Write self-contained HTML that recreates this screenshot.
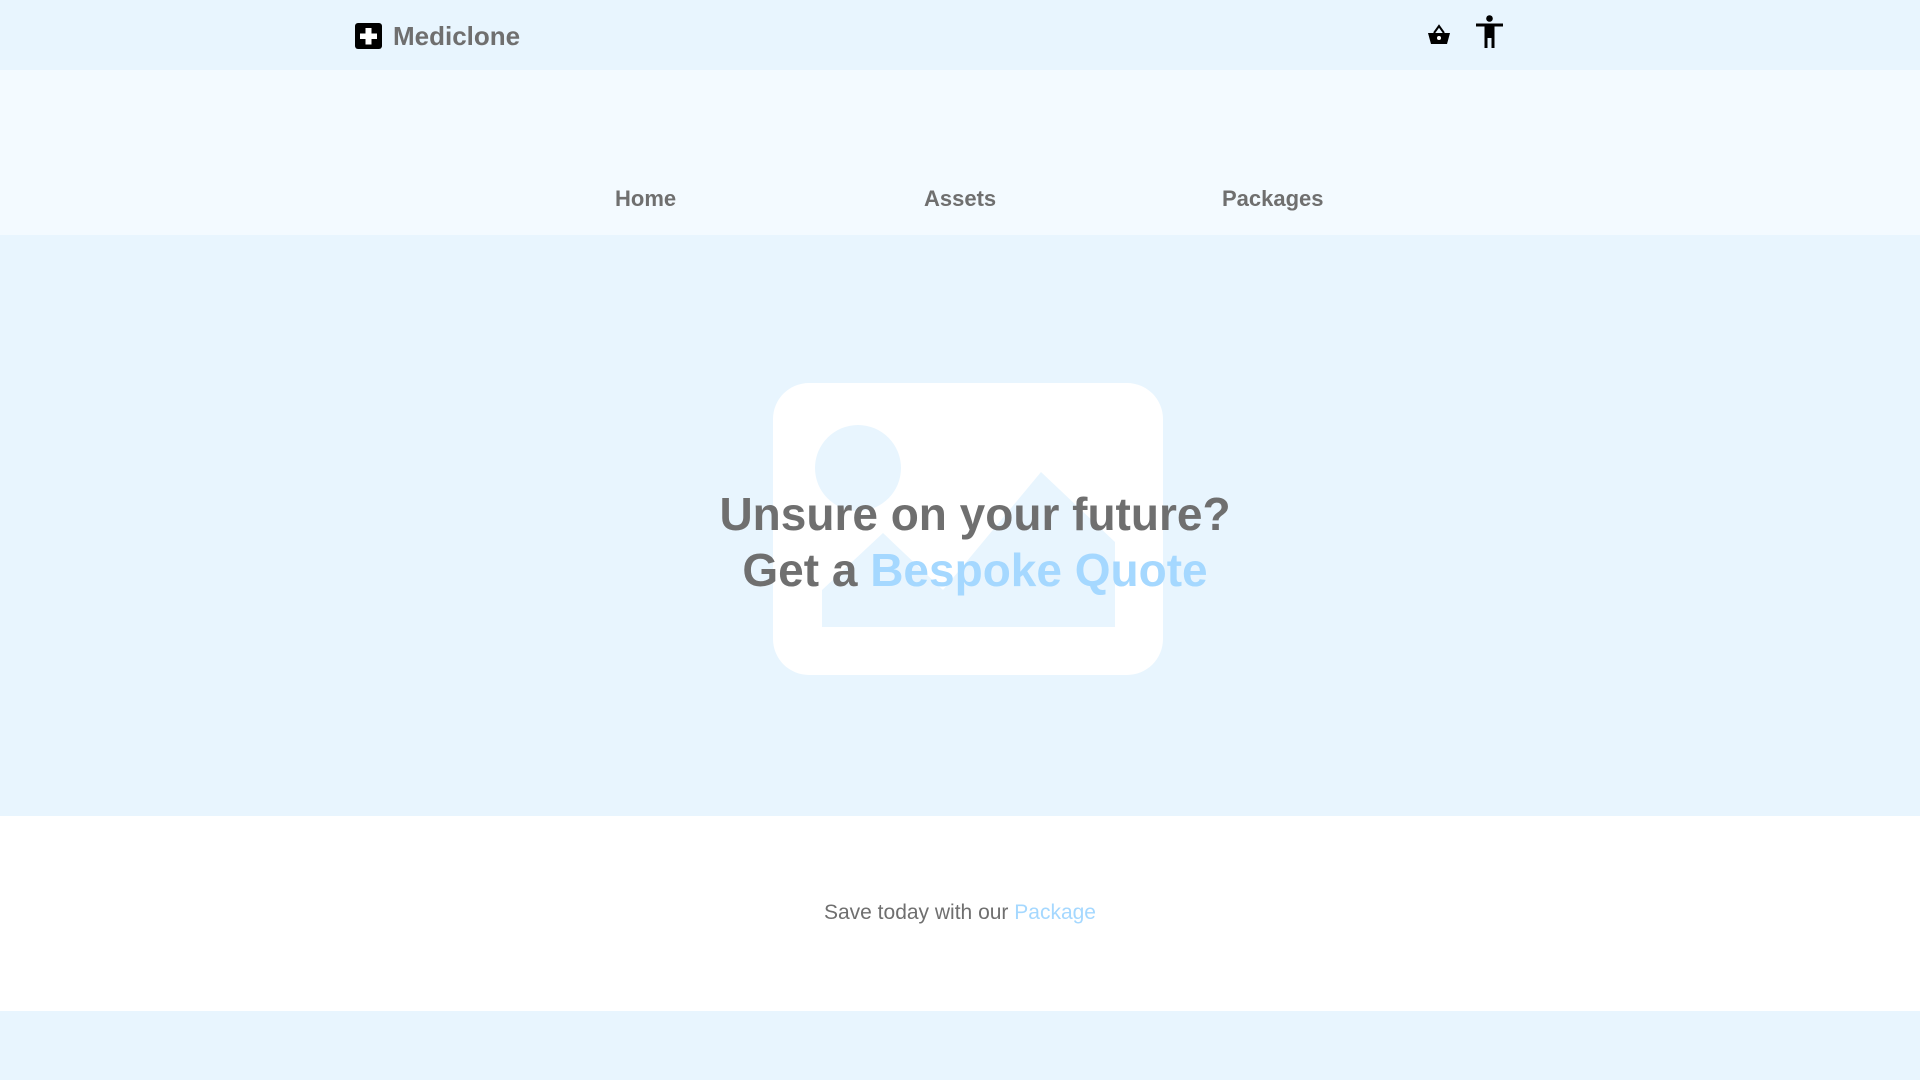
<!DOCTYPE html>
<html><head><meta charset="utf-8"><style>
*{margin:0;padding:0;box-sizing:border-box}
body{width:1920px;height:1080px;overflow:hidden;font-family:"Liberation Sans",Arial,sans-serif;background:#e8f5fe;position:relative}
.hdr{position:absolute;left:0;top:0;width:1920px;height:70px;background:#e8f5fe}
.nav{position:absolute;left:0;top:70px;width:1920px;height:165px;background:#f3faff}
.hero{position:absolute;left:0;top:235px;width:1920px;height:581px;background:#e8f5fe}
.white{position:absolute;left:0;top:816px;width:1920px;height:195px;background:#fff}
.t{position:absolute;font-weight:bold;color:#6f6f6f;white-space:nowrap}
.blue{color:#a5d8ff}
</style></head><body>
<div class="hdr"></div>
<div class="nav"></div>
<div class="hero"></div>
<div class="white"></div>
<svg style="position:absolute;left:355px;top:23px" width="27" height="26" viewBox="0 0 27 26"><rect width="27" height="26" rx="3" fill="#000"/><path d="M10.5 5h6v5.5h5.5v5.5h-5.5v5.5h-6v-5.5h-5.5v-5.5h5.5z" fill="#fff"/></svg>
<div class="t" style="left:393px;top:21px;font-size:26px">Mediclone</div>
<svg style="position:absolute;left:1427px;top:24px" width="24" height="22" viewBox="0 0 24 22"><path d="M7 9L12 2L17 9" fill="none" stroke="#000" stroke-width="2"/><path d="M1 9h22l-3 11H4z" fill="#000"/><circle cx="12" cy="14" r="2" fill="#fff"/></svg>
<svg style="position:absolute;left:1475px;top:15px" width="29" height="33" viewBox="0 0 29 33"><circle cx="14.5" cy="3.5" r="3.3" fill="#000"/><path d="M1 8.5h27v3h-8.5V33h-3v-10h-4v10h-3V11.5H1z" fill="#000"/></svg>
<div class="t" style="left:615px;top:186px;font-size:22px">Home</div>
<div class="t" style="left:924px;top:186px;font-size:22px">Assets</div>
<div class="t" style="left:1222px;top:186px;font-size:22px">Packages</div>
<svg style="position:absolute;left:773px;top:383px" width="390" height="292" viewBox="0 0 390 292"><rect width="390" height="292" rx="36" fill="#fff"/><circle cx="85" cy="85" r="43" fill="#e8f5fe"/><path d="M49 244V207L110 150L170 207L268 89L342 159V244z" fill="#e8f5fe"/></svg>
<div class="t" style="left:0;width:1950px;text-align:center;top:486px;font-size:46px;line-height:56px">Unsure on your future?<br>Get a <span class="blue">Bespoke Quote</span></div>
<div class="t" style="left:0;width:1920px;text-align:center;top:901px;font-size:21px;font-weight:normal">Save today with our <span class="blue">Package</span></div>
</body></html>
